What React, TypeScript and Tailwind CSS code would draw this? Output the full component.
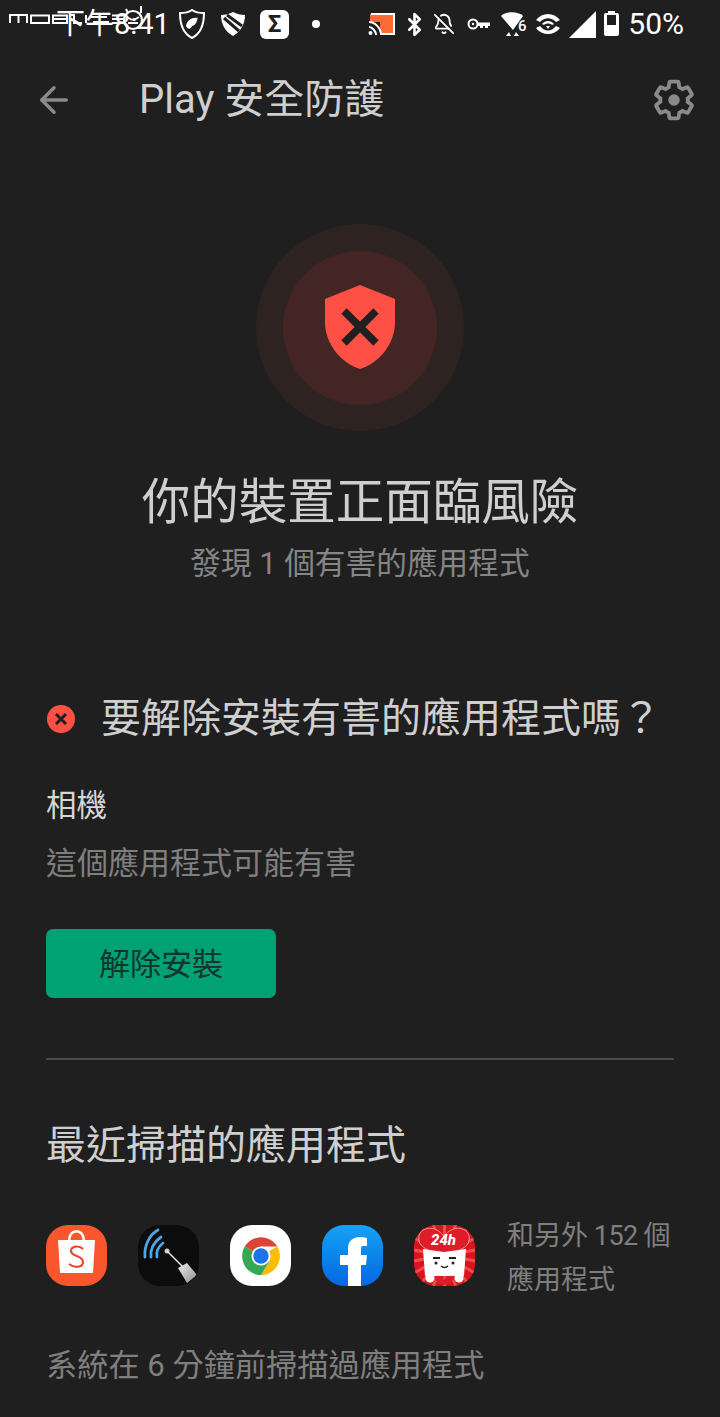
import { ArrowLeft, Bluetooth, BellOff } from 'lucide-react'

const Watermark = () => (
  <div className="absolute left-[9px] top-[5px] flex items-center">
    <svg width="136" height="32" viewBox="0 0 136 32" fill="none" stroke="#fff" strokeWidth="2">
      <path d="M1 18V10H18V18M9.500 10V18" />
      <rect x="22" y="10.500" width="18" height="7.500" />
      <path d="M44 10.500H58V18H44ZM44 14H58" />
      <path d="M62 10H65V18H73M77 10V18" />
      <path d="M82 12H98M84 17H100" />
      <path d="M103 10.500H116M103 14H116M103 18H116" />
      <circle cx="124" cy="15" r="9" strokeWidth="2.200" />
      <path d="M118 12L123 15M130 12L125 15M119 18H129M117 4L119 8M132 1V8" />
    </svg>
  </div>
)

const StatusBar = () => (
  <div className="relative flex h-[48px] items-center text-white">
    <span className="ml-[56px] w-[112px] whitespace-nowrap text-[29px] leading-none">下午8:41</span>
    <Watermark />
    <div className="ml-[10px] flex items-center">
      <svg width="28" height="30" viewBox="0 0 28 30" fill="none">
        <path d="M2 4C9 4 11 3 14 1C17 3 19 4 26 4C26 16 22 25 14 29C6 25 2 16 2 4Z" stroke="#fff" strokeWidth="2" />
        <path d="M8 17C9 11 14 8 20 9C18 11 20 15 14 17C13 20 10 21 8 17Z" fill="#fff" />
      </svg>
      <svg className="ml-[14px]" width="26" height="26" viewBox="0 0 26 26" fill="none">
        <path d="M1 4C6 4 9 3 13 1C17 3 20 4 25 4C25 14 20 21 13 25C6 21 1 14 1 4Z" fill="#fff" />
        <path d="M4 7L19 20M7 4L22 15" stroke="#1f1f1f" strokeWidth="3" />
      </svg>
      <div className="ml-[14px] flex h-[29px] w-[29px] items-center justify-center rounded-[6px] bg-white text-[24px] font-bold leading-none text-[#1f1f1f]">Σ</div>
      <div className="ml-[23px] h-[8px] w-[8px] rounded-full bg-white" />
    </div>
    <div className="ml-auto mr-[36px] flex items-center">
      <svg width="28" height="24" viewBox="0 0 28 24" fill="none">
        <path d="M2 2H26V22H12V10H2Z" fill="#ff6b35" />
        <path d="M3 2H26V22H13" stroke="#fff" strokeWidth="2" />
        <path d="M1 10C7 10 13 16 13 23M1 15C4 15 8 19 8 23" stroke="#fff" strokeWidth="2" />
        <circle cx="2.500" cy="21" r="2" fill="#fff" />
      </svg>
      <Bluetooth className="ml-[6px]" size={25} strokeWidth={2.500} />
      <BellOff className="ml-[6px]" size={22} strokeWidth={2} />
      <svg className="ml-[12px]" width="24" height="14" viewBox="0 0 24 14" fill="none">
        <circle cx="6" cy="7" r="4.500" stroke="#fff" strokeWidth="2" />
        <circle cx="6" cy="7" r="1.200" fill="#fff" />
        <path d="M10 5.500H23V9H21V11H18V9H16V11H13V9H10" fill="#fff" />
      </svg>
      <svg className="ml-[10px]" width="26" height="26" viewBox="0 0 26 26">
        <path d="M0 5C5 0 17 0 22 5L12 19Z" fill="#fff" />
        <path d="M5 25L8 21L10 25ZM13 25L15 21L18 25Z" fill="#fff" />
        <text x="17" y="20" fontSize="15" fontWeight="500" fill="#fff" fontFamily="Roboto, sans-serif">6</text>
      </svg>
      <svg className="ml-[8px]" width="26" height="22" viewBox="0 0 26 22" fill="none">
        <path d="M1 7C7 -1 19 -1 25 7L21 9C16 4 10 4 5 9Z" fill="#fff" />
        <path d="M7 11C10 7 16 7 19 11L17 12C15 10 11 10 9 12Z" fill="#fff" />
        <path d="M1 15L5 13C10 19 16 19 21 13L25 15C19 23 7 23 1 15Z" fill="#fff" />
        <path d="M11 13H15L13 16Z" fill="#fff" />
      </svg>
      <svg className="ml-[8px]" width="27" height="27" viewBox="0 0 27 27">
        <path d="M27 0V27H0Z" fill="#fff" />
      </svg>
      <div className="relative ml-[8px] h-[23px] w-[15px] rounded-[2px] bg-white">
        <div className="absolute -top-[2px] left-[4px] h-[3px] w-[7px] bg-white" />
        <div className="absolute left-[3px] top-[2px] h-[10px] w-[9px] bg-[#1f1f1f]" />
      </div>
      <span className="ml-[9px] font-['Roboto'] text-[30px] leading-none">50%</span>
    </div>
  </div>
)

const Gear = () => (
  <svg width="46" height="46" viewBox="0 0 24 24" fill="none">
    <path
      d="M19.140 12.940c.040-.300.060-.610.060-.940 0-.320-.020-.640-.070-.940l2.030-1.580c.180-.140.230-.410.120-.610l-1.920-3.320c-.120-.220-.370-.290-.590-.220l-2.390.960c-.500-.380-1.030-.700-1.620-.940l-.360-2.540c-.040-.240-.240-.410-.480-.410h-3.840c-.240 0-.430.170-.470.410l-.360 2.540c-.590.240-1.130.570-1.620.940l-2.390-.960c-.220-.080-.470 0-.590.220L2.740 8.870c-.120.210-.080.470.120.610l2.030 1.580c-.050.300-.090.630-.090.940s.020.640.070.940l-2.030 1.580c-.180.140-.230.410-.12.610l1.920 3.320c.120.220.370.290.590.220l2.390-.960c.500.380 1.030.700 1.620.940l.360 2.540c.050.240.240.410.480.410h3.840c.240 0 .440-.170.470-.410l.360-2.540c.590-.240 1.130-.560 1.620-.940l2.390.960c.220.080.470 0 .590-.220l1.920-3.320c.120-.220.070-.470-.120-.610l-2.010-1.580z"
      stroke="#8a8a8a"
      strokeWidth="2"
    />
    <circle cx="12" cy="12" r="3" fill="#8a8a8a" />
  </svg>
)

const Header = () => (
  <div className="flex h-[100px] items-center pl-[33px] pr-[23px] pt-[3px]">
    <ArrowLeft size={42} strokeWidth={2} className="text-[#8a8a8a]" />
    <h1 className="ml-[64px] text-[40px] leading-none text-[#cfcfcf]">
      <span className="font-['Roboto']">Play</span> 安全防護
    </h1>
    <div className="ml-auto">
      <Gear />
    </div>
  </div>
)

const ShieldHero = () => (
  <div className="mt-[76px] flex flex-col items-center">
    <div className="flex h-[207px] w-[208px] items-center justify-center rounded-full bg-[#2f2322]">
      <div className="flex h-[154px] w-[154px] items-center justify-center rounded-full bg-[#432623]">
        <svg width="72" height="86" viewBox="0 0 72 86" className="-mt-[2px]">
          <path d="M36 1L71 15V38C71 60 55 79 36 85C17 79 1 60 1 38V15Z" fill="#fe5044" />
          <path d="M20 27L52 59M52 27L20 59" stroke="#1f1f1f" strokeWidth="7.500" />
        </svg>
      </div>
    </div>
    <h2 className="mt-[40px] text-[48.500px] leading-[64px] text-[#cfcfcf]">你的裝置正面臨風險</h2>
    <p className="mt-[9px] text-[30.700px] leading-[40px] text-[#858585]">發現 1 個有害的應用程式</p>
  </div>
)

const AppIcon = ({ className, children }: { className: string; children: React.ReactNode }) => (
  <div className={`flex h-[61px] w-[61px] items-center justify-center overflow-hidden rounded-[22px] ${className}`}>
    {children}
  </div>
)

const rays = [0, 20, 40, 60, 80, 100, 120, 140, 160, 180, 200, 220, 240, 260, 280, 300, 320, 340]

const ScannedApps = () => (
  <div className="mt-[51px] flex items-start">
    <div className="flex gap-[31px]">
      <AppIcon className="bg-[#f9562d]">
        <svg width="61" height="61" viewBox="0 0 61 61">
          <path d="M23 16C23 3 38 3 38 16" fill="none" stroke="#fff" strokeWidth="2.500" />
          <path d="M12 15H49L47 48H14Z" fill="#fff" />
          <path d="M37 24C33 20 25 21 25 26C25 32 37 30 37 37C37 43 28 43 23 39" fill="none" stroke="#e8492a" strokeWidth="2.200" />
        </svg>
      </AppIcon>
      <AppIcon className="bg-[#0c0c0c]">
        <svg width="61" height="61" viewBox="0 0 61 61" fill="none">
          <defs>
            <linearGradient id="cup" x1="0" y1="0" x2="1" y2="1">
              <stop offset="0" stopColor="#eee" />
              <stop offset="1" stopColor="#8f8f8f" />
            </linearGradient>
          </defs>
          <path d="M7 32C6 21 11 10 20 5M13 32C12 24 16 17 23 12M19 32C18 27 20 22 25 18" stroke="#4aa6e8" strokeWidth="2.800" strokeLinecap="round" />
          <circle cx="29" cy="26" r="2.500" fill="#ccc" />
          <path d="M29 26L45 42" stroke="#eee" strokeWidth="1.500" />
          <path d="M40 43L49 38L59 50L49 58Z" fill="url(#cup)" />
        </svg>
      </AppIcon>
      <AppIcon className="bg-white">
        <svg width="46" height="46" viewBox="0 0 48 48">
          <path d="M24 24L7 14A20 20 0 0 1 41 14H24Z" fill="#db4437" />
          <path d="M24 24L41 14A20 20 0 0 1 24 44L33 29Z" fill="#fbbc05" />
          <path d="M24 24L33 29L24 44A20 20 0 0 1 7 14Z" fill="#34a853" />
          <circle cx="24" cy="24" r="10" fill="#fff" />
          <circle cx="24" cy="24" r="8" fill="#1a73e8" />
        </svg>
      </AppIcon>
      <AppIcon className="bg-gradient-to-b from-[#19a2f5] to-[#0a66e2]">
        <svg width="61" height="61" viewBox="0 0 61 61">
          <path d="M26 61V40H18V30H26V23C26 16 31 12 38 12C41 12 43 12.500 45 13V21H41C39 21 39 22 39 25V30H45L44 40H39V61Z" fill="#fff" />
        </svg>
      </AppIcon>
      <AppIcon className="bg-[#d8141c]">
        <svg width="61" height="61" viewBox="0 0 61 61">
          {rays.map(r => (
            <path key={r} d="M30.500 30.500L30.500 -10" stroke="#f24a4a" strokeWidth="3" transform={`rotate(${r} 30.500 30.500)`} />
          ))}
          <path d="M30 12C22 -2 2 2 5 16C6 22 15 26 30 32C45 26 54 22 55 16C58 2 38 -2 30 12Z" fill="#e01b2a" stroke="#f7b5b5" strokeWidth="0.800" />
          <text x="17" y="20" fontSize="15" fontWeight="800" fontStyle="italic" fill="#fff" fontFamily="Roboto, sans-serif">24h</text>
          <path d="M9 24L30 27L52 24L50 51H11Z" fill="#fff" />
          <path d="M19 33H26M35 33H42" stroke="#222" strokeWidth="1.800" />
          <circle cx="22" cy="38" r="1.500" fill="#222" />
          <circle cx="39" cy="38" r="1.500" fill="#222" />
          <path d="M27 41Q30.500 44 34 41" fill="none" stroke="#222" strokeWidth="1.500" />
          <path d="M30 55C26 49 20 50 21 54C22 57 26 59 30 60C34 59 38 57 40 54C41 50 34 49 30 55Z" fill="#e01b2a" />
          <circle cx="16" cy="53" r="4.500" fill="#fff" />
          <circle cx="45" cy="53" r="4.500" fill="#fff" />
        </svg>
      </AppIcon>
    </div>
    <p className="-mt-[11px] ml-[32px] text-[27px] leading-[44px] text-[#7f7f7f]">
      和另外 <span className="-mx-[1px] tracking-[-0.5px]">152</span> 個
      <br />
      應用程式
    </p>
  </div>
)

const App = () => {
  return (
    <div className="h-[1417px] w-[720px] overflow-hidden bg-[#1f1f1f] font-['Roboto','Noto_Sans_CJK_TC',sans-serif]">
      <StatusBar />
      <Header />
      <ShieldHero />

      <div className="px-[46px]">
        <div className="mt-[107px] flex items-center">
          <div className="ml-px flex h-[28px] w-[28px] items-center justify-center rounded-full bg-[#fe5044]">
            <svg width="14" height="14" viewBox="0 0 14 14">
              <path d="M2 2L12 12M12 2L2 12" stroke="#1f1f1f" strokeWidth="3" />
            </svg>
          </div>
          <h3 className="ml-[26px] whitespace-nowrap text-[40px] leading-[56px] text-[#cfcfcf]">要解除安裝有害的應用程式嗎？</h3>
        </div>

        <p className="mt-[39px] text-[30.500px] leading-[40px] text-[#d6d6d6]">相機</p>
        <p className="mt-[18px] text-[31px] leading-[40px] text-[#7f7f7f]">這個應用程式可能有害</p>

        <button className="mt-[45px] flex h-[69px] w-[230px] items-center justify-center rounded-[7px] bg-[#00a173] pt-[3px] text-[31px] text-[#12352b]">
          解除安裝
        </button>

        <div className="mt-[60px] h-[2px] bg-[#4a4a4a]" />

        <h3 className="mt-[58px] text-[40px] leading-[56px] text-[#cfcfcf]">最近掃描的應用程式</h3>

        <ScannedApps />

        <p className="mt-[42px] text-[31.200px] leading-[44px] text-[#7f7f7f]">系統在 6 分鐘前掃描過應用程式</p>
      </div>
    </div>
  )
}

export default App
